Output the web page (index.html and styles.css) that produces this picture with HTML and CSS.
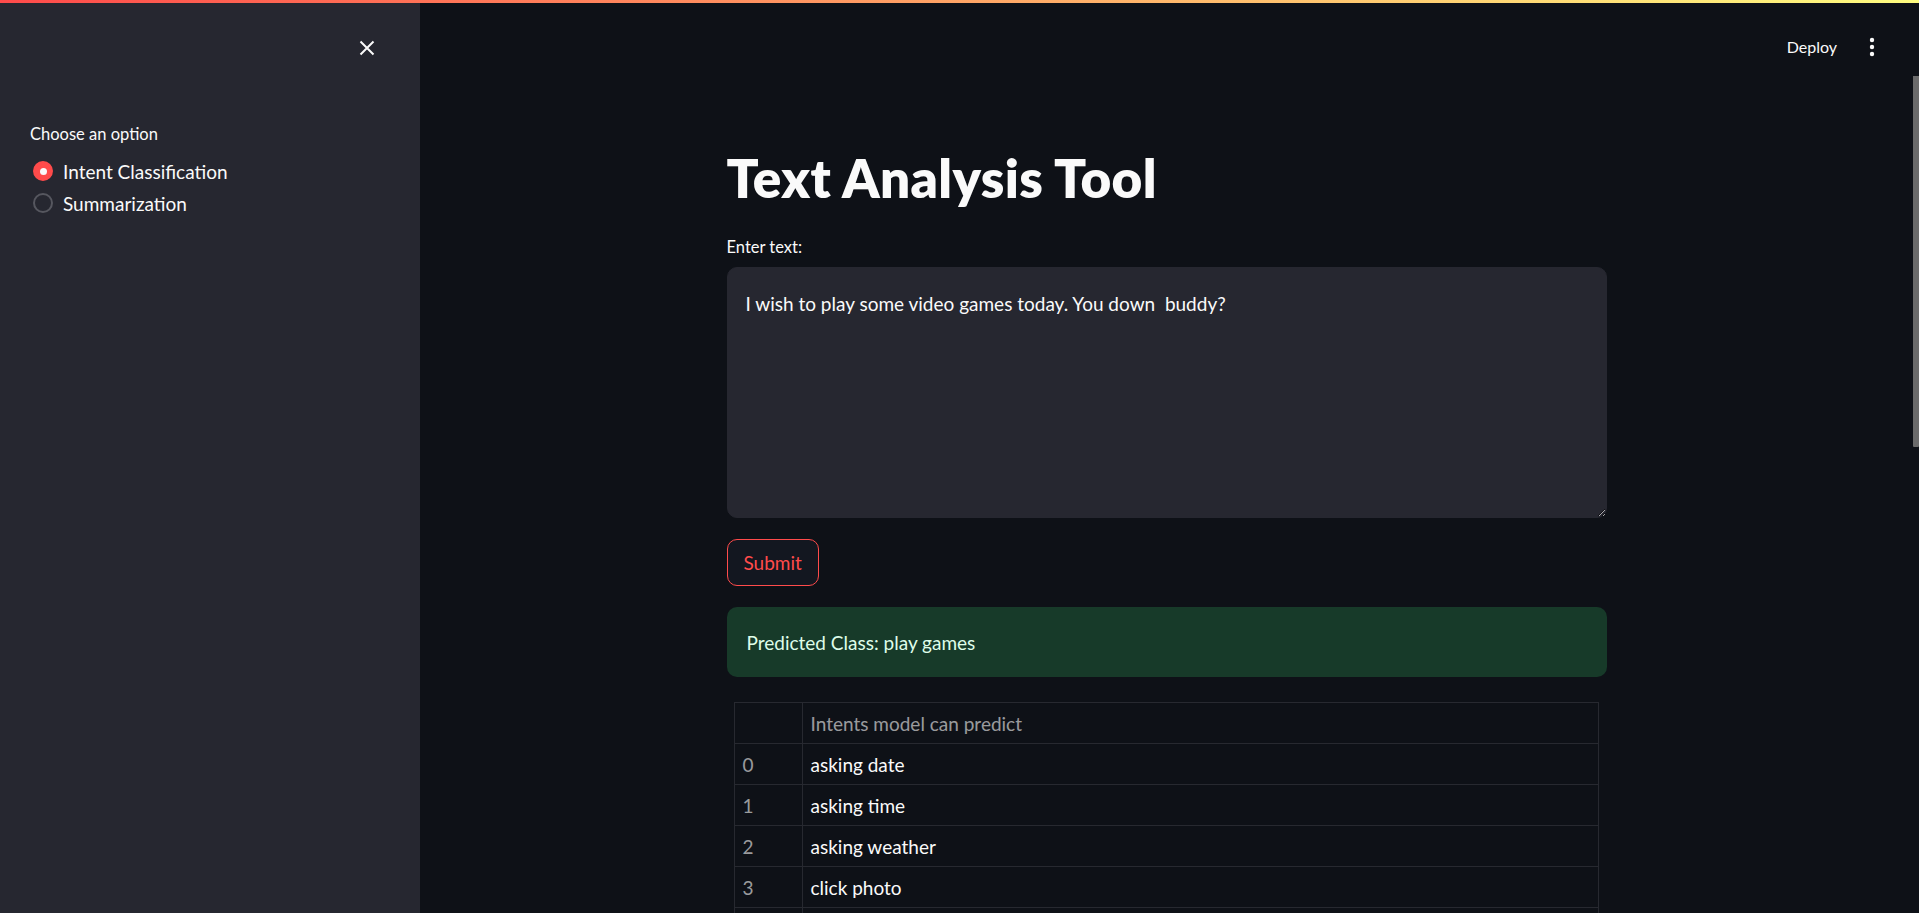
FILE: index.html
```html
<!DOCTYPE html>
<html lang="en">
<head>
<meta charset="utf-8">
<title>Text Analysis Tool</title>
<link rel="stylesheet" href="styles.css">
</head>
<body>
<div class="topbar"></div>
<div class="app">
  <aside class="sidebar">
    <div class="sidebar-head">
      <button class="close-btn" aria-label="Close sidebar">
        <svg width="16" height="16" viewBox="0 0 16 16"><path d="M1.5 1.5 L14.5 14.5 M14.5 1.5 L1.5 14.5" stroke="#fafafa" stroke-width="2" stroke-linecap="butt" fill="none"/></svg>
      </button>
    </div>
    <div class="sidebar-body">
      <div class="widget-label">Choose an option</div>
      <div class="radio-group">
        <label class="radio checked"><span class="radio-dot"></span><span>Intent Classification</span></label>
        <label class="radio"><span class="radio-dot"></span><span>Summarization</span></label>
      </div>
    </div>
  </aside>
  <main class="main">
    <header class="header">
      <span class="deploy">Deploy</span>
      <button class="menu-btn" aria-label="Main menu">
        <svg width="6" height="20" viewBox="0 0 6 20"><circle cx="3" cy="3" r="2.2" fill="#fafafa"/><circle cx="3" cy="10" r="2.2" fill="#fafafa"/><circle cx="3" cy="17" r="2.2" fill="#fafafa"/></svg>
      </button>
    </header>
    <div class="main-body">
      <div class="content">
        <div class="block">
          <h1 class="title">Text Analysis Tool</h1>
          <div class="widget-label field-label">Enter text:</div>
          <textarea class="textarea">I wish to play some video games today. You down  buddy?</textarea>
          <button class="submit">Submit</button>
          <div class="success">Predicted Class: play games</div>
          <table class="frame">
            <thead>
              <tr><th class="idx"></th><th>Intents model can predict</th></tr>
            </thead>
            <tbody>
              <tr><td class="idx">0</td><td>asking date</td></tr>
              <tr><td class="idx">1</td><td>asking time</td></tr>
              <tr><td class="idx">2</td><td>asking weather</td></tr>
              <tr><td class="idx">3</td><td>click photo</td></tr>
              <tr><td class="idx">4</td><td>play games</td></tr>
            </tbody>
          </table>
        </div>
      </div>
      <div class="rail"><div class="thumb"></div></div>
    </div>
  </main>
</div>
</body>
</html>
```
FILE: styles.css
```css
* { box-sizing: border-box; }

html, body {
  margin: 0;
  height: 100%;
}

body {
  background: #0e1117;
  color: #fafafa;
  font-family: Lato, "Noto Sans", sans-serif;
  overflow: hidden;
}

.topbar {
  height: 3px;
  background: linear-gradient(90deg, rgb(255, 75, 75), rgb(255, 253, 128));
}

.app {
  display: flex;
  height: calc(100vh - 3px);
}

/* Sidebar */
.sidebar {
  width: 420px;
  flex: none;
  background: #262730;
}

.sidebar-head {
  height: 90px;
  display: flex;
  justify-content: flex-end;
  align-items: flex-start;
  padding: 25px 33px 0 0;
}

.close-btn {
  width: 40px;
  height: 40px;
  border: 0;
  background: transparent;
  padding: 0;
  display: flex;
  align-items: center;
  justify-content: center;
}

.sidebar-body {
  padding: 30px 30px 0 30px;
}

.widget-label {
  font-size: 16.5px;
  line-height: 22px;
  color: #fafafa;
}

.radio-group {
  margin-top: 10px;
  display: flex;
  flex-direction: column;
}

.radio {
  height: 32px;
  display: flex;
  align-items: center;
  gap: 10px;
  padding-left: 3px;
  font-size: 19px;
  color: #fafafa;
}

.radio-dot {
  width: 20px;
  height: 20px;
  border-radius: 50%;
  border: 2px solid #56575f;
  display: flex;
  align-items: center;
  justify-content: center;
  flex: none;
}

.radio.checked .radio-dot {
  background: #ff4b4b;
  border-color: #ff4b4b;
}

.radio.checked .radio-dot::after {
  content: "";
  width: 7px;
  height: 7px;
  border-radius: 50%;
  background: #fafafa;
}

/* Main */
.main {
  flex: 1;
  display: flex;
  flex-direction: column;
  min-width: 0;
}

.header {
  height: 73px;
  flex: none;
  display: flex;
  justify-content: flex-end;
  align-items: center;
  padding: 15px 31px 0 0;
  gap: 19px;
}

.deploy {
  font-size: 16px;
  line-height: 22px;
  color: #fafafa;
}

.menu-btn {
  width: 32px;
  height: 26px;
  border: 0;
  background: transparent;
  padding: 0;
  display: flex;
  align-items: center;
  justify-content: center;
}

.main-body {
  flex: 1;
  min-height: 0;
  display: flex;
}

.content {
  flex: 1;
  min-width: 0;
  overflow: hidden;
}

.rail {
  width: 6px;
  flex: none;
}

.thumb {
  height: 371px;
  background: #6b6b6b;
  border-radius: 0 0 1px 1px;
}

.block {
  width: 880px;
  margin: 0 auto;
  padding-top: 69px;
  display: flex;
  flex-direction: column;
  align-items: flex-start;
}

.title {
  margin: 0;
  font-size: 53px;
  line-height: 66px;
  font-weight: 800;
  color: #fafafa;
  letter-spacing: 0.35px;
}

.field-label {
  margin-top: 25px;
}

.textarea {
  margin-top: 9px;
  width: 880px;
  height: 251px;
  background: #262730;
  color: #fafafa;
  border: 1px solid #262730;
  border-radius: 10px;
  padding: 20px 18px;
  font-family: inherit;
  font-size: 19px;
  line-height: 32px;
  resize: vertical;
  outline: none;
  color-scheme: dark;
}

.submit {
  margin-top: 21px;
  height: 47px;
  padding: 0 16px;
  border: 1px solid #ff4b4b;
  border-radius: 10px;
  background: rgb(19, 23, 32);
  color: #ff4b4b;
  font-family: inherit;
  font-size: 19px;
}

.success {
  margin-top: 21px;
  width: 880px;
  height: 70px;
  display: flex;
  align-items: center;
  padding: 0 20px;
  background: rgb(23, 58, 41);
  color: rgb(223, 253, 233);
  border-radius: 10px;
  font-size: 19px;
}

.frame {
  margin-top: 25px;
  margin-left: 7px;
  width: 865px;
  border-collapse: collapse;
  font-size: 19px;
}

.frame th,
.frame td {
  height: 41px;
  border: 1px solid #272930;
  padding: 0 0 0 8px;
  text-align: left;
  font-weight: 400;
  color: #fafafa;
}

.frame th {
  color: rgba(250, 250, 250, 0.6);
}

.frame .idx {
  width: 68px;
  color: rgba(250, 250, 250, 0.6);
}
```
